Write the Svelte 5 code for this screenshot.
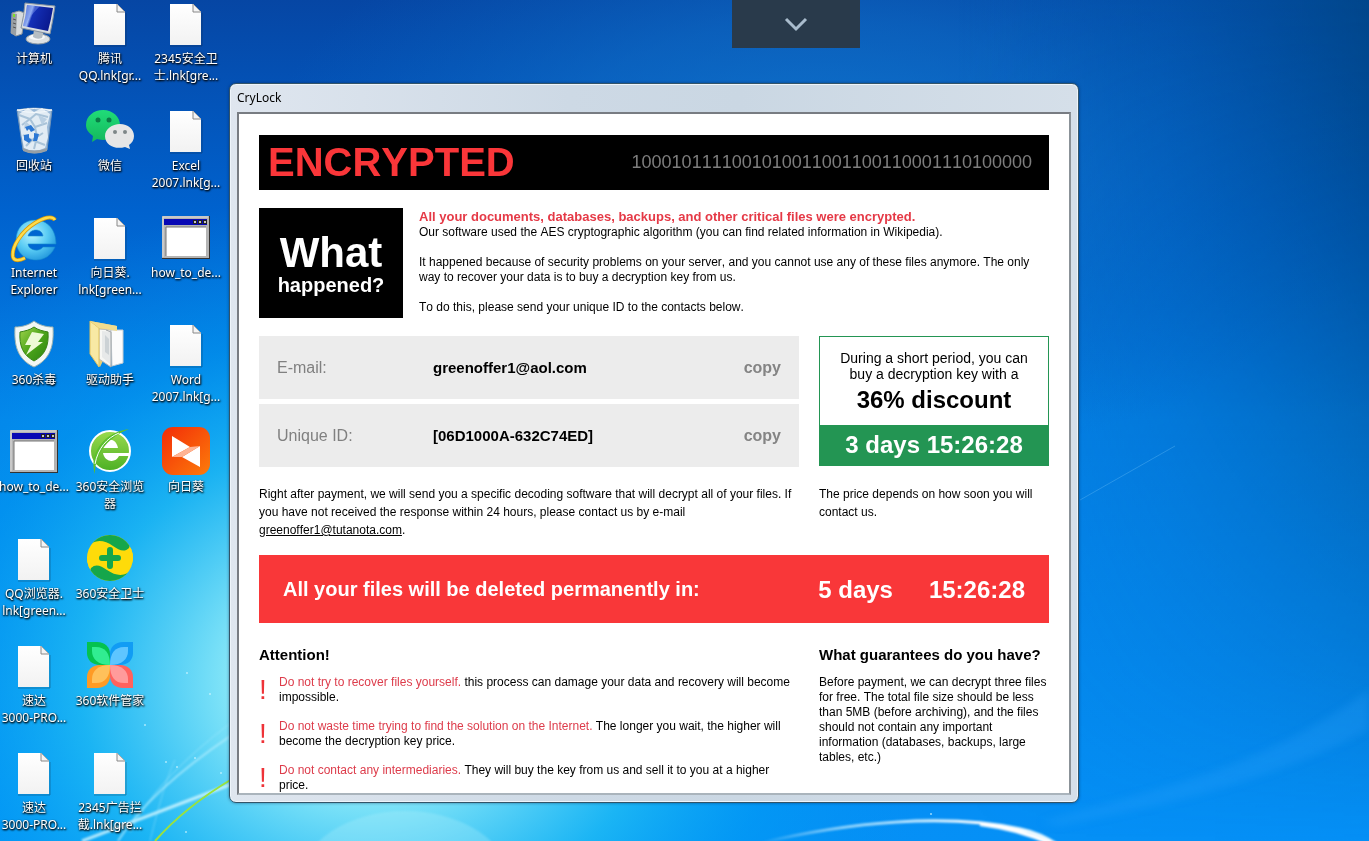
<script>
  const columns = [
    [
      { icon: 'computer', lines: ['计算机'] },
      { icon: 'bin', lines: ['回收站'] },
      { icon: 'ie', lines: ['Internet', 'Explorer'] },
      { icon: 'shield', lines: ['360杀毒'] },
      { icon: 'app', lines: ['how_to_de...'] },
      { icon: 'doc', lines: ['QQ浏览器.', 'lnk[green...'] },
      { icon: 'doc', lines: ['速达', '3000-PRO...'] },
      { icon: 'doc', lines: ['速达', '3000-PRO...'] }
    ],
    [
      { icon: 'doc', lines: ['腾讯', 'QQ.lnk[gr...'] },
      { icon: 'wechat', lines: ['微信'] },
      { icon: 'doc', lines: ['向日葵.', 'lnk[green...'] },
      { icon: 'folder', lines: ['驱动助手'] },
      { icon: 'browser', lines: ['360安全浏览', '器'] },
      { icon: 'guard', lines: ['360安全卫士'] },
      { icon: 'petals', lines: ['360软件管家'] },
      { icon: 'doc', lines: ['2345广告拦', '截.lnk[gre...'] }
    ],
    [
      { icon: 'doc', lines: ['2345安全卫', '士.lnk[gre...'] },
      { icon: 'doc', lines: ['Excel', '2007.lnk[g...'] },
      { icon: 'app', lines: ['how_to_de...'] },
      { icon: 'doc', lines: ['Word', '2007.lnk[g...'] },
      { icon: 'sunflower', lines: ['向日葵'] }
    ]
  ];

  const contacts = [
    { label: 'E-mail:', value: 'greenoffer1@aol.com' },
    { label: 'Unique ID:', value: '[06D1000A-632C74ED]' }
  ];

  const warnings = [
    {
      lead: 'Do not try to recover files yourself.',
      rest: 'this process can damage your data and recovery will become impossible.'
    },
    {
      lead: 'Do not waste time trying to find the solution on the Internet.',
      rest: 'The longer you wait, the higher will become the decryption key price.'
    },
    {
      lead: 'Do not contact any intermediaries.',
      rest: 'They will buy the key from us and sell it to you at a higher price.'
    }
  ];
</script>

<div class="desktop">
  <svg class="wallpaper" viewBox="0 0 1369 841" preserveAspectRatio="none" aria-hidden="true">
    <defs>
      <linearGradient id="sky" x1="0" y1="0" x2="0" y2="1">
        <stop offset="0" stop-color="#0646a4" />
        <stop offset=".25" stop-color="#0062ce" />
        <stop offset=".5" stop-color="#0482e8" />
        <stop offset="1" stop-color="#0590f6" />
      </linearGradient>
      <linearGradient id="dim" x1="0" y1="0" x2="1" y2="0">
        <stop offset=".7" stop-color="#0060b4" stop-opacity="0" />
        <stop offset=".85" stop-color="#0058a8" stop-opacity=".4" />
        <stop offset="1" stop-color="#004684" stop-opacity=".8" />
      </linearGradient>
      <linearGradient id="fade" x1="0" y1="0" x2="0" y2="1">
        <stop offset="0" stop-color="#fff" />
        <stop offset=".8" stop-color="#fff" stop-opacity=".25" />
        <stop offset="1" stop-color="#fff" stop-opacity="0" />
      </linearGradient>
      <mask id="upper"><rect width="1369" height="841" fill="url(#fade)" /></mask>
      <radialGradient id="haze" gradientUnits="userSpaceOnUse" cx="0" cy="0" r="1" gradientTransform="translate(820 170) scale(560 300)">
        <stop offset="0" stop-color="#1480d4" stop-opacity=".75" />
        <stop offset=".5" stop-color="#1074cc" stop-opacity=".5" />
        <stop offset="1" stop-color="#0868c4" stop-opacity="0" />
      </radialGradient>
      <radialGradient id="glow" gradientUnits="userSpaceOnUse" cx="0" cy="0" r="1" gradientTransform="translate(370 680) scale(580 490)">
        <stop offset="0" stop-color="#c8f8fc" />
        <stop offset=".25" stop-color="#86e8f8" stop-opacity=".95" />
        <stop offset=".5" stop-color="#20bef4" stop-opacity=".8" />
        <stop offset=".72" stop-color="#00a0f4" stop-opacity=".45" />
        <stop offset="1" stop-color="#0090f0" stop-opacity="0" />
      </radialGradient>
      <linearGradient id="arc" x1="0" y1="0" x2="1" y2="0">
        <stop offset="0" stop-color="#fff" stop-opacity="0" />
        <stop offset=".3" stop-color="#bdeaff" stop-opacity=".8" />
        <stop offset=".75" stop-color="#fff" />
        <stop offset="1" stop-color="#e8faff" />
      </linearGradient>
      <filter id="soft"><feGaussianBlur stdDeviation="1" /></filter>
      <filter id="softer"><feGaussianBlur stdDeviation="4" /></filter>
    </defs>
    <rect width="1369" height="841" fill="url(#sky)" />
    <rect width="1369" height="841" fill="url(#haze)" />
    <rect width="1369" height="841" fill="url(#dim)" mask="url(#upper)" />
    <rect width="1369" height="841" fill="url(#glow)" />
    <ellipse cx="405" cy="882" rx="105" ry="71" fill="#b6f2fb" opacity=".28" filter="url(#soft)" />
    <g fill="none" filter="url(#soft)">
      <path d="M82 841Q150 815 232 784" stroke="#d8f8ff" stroke-width="3" opacity=".8" />
      <path d="M118 841Q150 790 232 735" stroke="#b8f0ff" stroke-width="2" opacity=".7" />
      <path d="M130 832Q155 780 232 722" stroke="#a8ecff" stroke-width="1" opacity=".6" />
      <path d="M150 841Q165 780 175 760" stroke="#b8f0ff" stroke-width="1" opacity=".4" />
      <path d="M760 843C850 822 945 813 1020 829Q1040 833 1058 845" stroke="url(#arc)" stroke-width="3" />
      <path d="M980 824Q1020 829 1052 844" stroke="#fff" stroke-width="4" />
    </g>
    <path d="M155 841Q185 807 232 779" fill="none" stroke="#9be23c" stroke-width="2" />
    <path d="M1080 500L1175 446" stroke="#60b8f4" opacity=".4" />
    <path d="M1040 822C1150 790 1260 770 1369 690V730C1250 790 1160 805 1060 826Z" fill="#36a8ff" opacity=".22" filter="url(#softer)" />
    <g fill="#d8f8ff" opacity=".7">
      <circle cx="166" cy="762" r="1" /><circle cx="177" cy="767" r="1" /><circle cx="187" cy="673" r="1" />
      <circle cx="195" cy="758" r="1" /><circle cx="145" cy="725" r="1" /><circle cx="210" cy="694" r="1" />
      <circle cx="186" cy="832" r="1" /><circle cx="221" cy="773" r="1" /><circle cx="931" cy="814" r="1" />
    </g>
  </svg>

  <div class="icons">
    {#each columns as column}
      <div class="column">
        {#each column as item}
          <button class="shortcut" type="button">
            <svg width="48" height="48" viewBox="0 0 48 48" aria-hidden="true">
              {#if item.icon === 'doc'}
                <defs>
                  <linearGradient id="paper" x1="0" y1="0" x2="0" y2="1">
                    <stop offset="0" stop-color="#fff" /><stop offset="1" stop-color="#f2f2f2" />
                  </linearGradient>
                </defs>
                <path d="M8 46H40V13" fill="none" stroke="#123" stroke-opacity=".35" />
                <path d="M8 4H31L39 12V45H8Z" fill="url(#paper)" />
                <path d="M31 4V12H39" fill="#f4f4f4" stroke="#888" />
                <path d="M31 4L39 12" stroke="#aaa" />
              {:else if item.icon === 'app'}
                <rect y="2" width="48" height="43" fill="#333" />
                <rect y="2" width="47" height="42" fill="#b4b4b4" />
                <path d="M1 43V3H46" fill="none" stroke="#ddd" />
                <rect x="2" y="5" width="43" height="6" fill="#0808b4" />
                <rect x="4" y="13" width="40" height="29" fill="#fff" />
                <path d="M4 42V13H44" fill="none" stroke="#777" />
                <path d="M31 6h4v4h-4zM36 6h4v4h-4zM41 6h4v4h-4z" fill="#222" />
                <path d="M32 7h2v2h-2zM37 7h2v2h-2zM42 7h2v2h-2z" fill="#c4c4c4" />
              {:else if item.icon === 'computer'}
                <defs>
                  <linearGradient id="screen" x1="0" y1="0" x2="1" y2=".3">
                    <stop offset="0" stop-color="#1a3cc0" /><stop offset=".32" stop-color="#98b4f4" />
                    <stop offset=".4" stop-color="#1430b8" /><stop offset="1" stop-color="#0a1a90" />
                  </linearGradient>
                </defs>
                <path d="M2 13L9 11L15 13L12 34L6 36L1 33Z" fill="#d7dbdd" stroke="#8b9499" />
                <path d="M2 13L7 14L6 36L1 33Z" fill="#999fa3" />
                <path d="M3 19L6 20M3 23L6 24M3 27L6 28" stroke="#555" />
                <rect x="3" y="14" width="2" height="3" fill="#7cdf2a" />
                <ellipse cx="28" cy="39" rx="12" ry="5" fill="#dde1e3" stroke="#929ca3" />
                <ellipse cx="27" cy="37" rx="8" ry="3" fill="#f6f8f9" />
                <path d="M24 29L34 31L32 38Q27 40 23 37Z" fill="#b6bec3" />
                <path d="M15 3L45 6Q43 20 40 34L11 28Q14 16 15 3Z" fill="#d8dde1" stroke="#8793a0" />
                <path d="M17 5L43 8Q41 20 38 31L13 26Q16 16 17 5Z" fill="url(#screen)" />
                <path d="M17 5L30 6Q22 14 13 26Q16 16 17 5Z" fill="#7f9bf0" opacity=".45" />
              {:else if item.icon === 'bin'}
                <path d="M7 3Q24 -1 42 3L37 43Q24 49 13 43Z" fill="#b4cadc" opacity=".85" stroke="#8aa2b8" />
                <path d="M9 7L18 1L24 5L32 1L40 7L37 20L38 30L35 41Q24 46 14 41L11 26Z" fill="#e2ecf4" />
                <path d="M9 8L20 12L26 7L38 10M12 18L20 12L25 20L37 16M13 28L22 33L33 26M25 20L27 30L24 42M16 39L22 33L35 38" fill="none" stroke="#a9c3d8" stroke-width="2" />
                <path d="M28 8L37 12L32 18ZM15 14L20 18L14 22Z" fill="#b9cfe2" />
                <g fill="#2c78d4">
                  <path d="M15 20L21 18L25 23L21 25L19 22L17 24Z" />
                  <path d="M24 26L29 27L27 34L23 34L24 30Z" />
                  <path d="M14 28L19 27L19 31L22 33L19 36L14 33Z" />
                </g>
                <path d="M13 41Q24 46 37 41V44Q24 49 13 44Z" fill="#969fa6" />
                <path d="M7 3Q24 8 42 3Q24 0 7 3Z" fill="none" stroke="#f4f9fc" />
              {:else if item.icon === 'ie'}
                <defs>
                  <radialGradient id="ieblue" cx=".4" cy=".35" r=".7">
                    <stop offset="0" stop-color="#b8f3ff" /><stop offset=".55" stop-color="#5accf4" /><stop offset="1" stop-color="#2297dc" />
                  </radialGradient>
                </defs>
                <path d="M25 6C38 6 46 16 46 30H18C19 37 30 38 33 33H45C41 42 34 46 26 46C13 46 6 37 6 26C6 14 14 6 25 6ZM18 22H33C32 14 20 14 18 22Z" fill="url(#ieblue)" stroke="#168bcc" stroke-width=".6" />
                <path d="M45 6C42 1 33 4 25 9C12 17 1 33 3 43C4 47 9 47 15 44" fill="none" stroke="#d89a0a" stroke-width="4" />
                <path d="M45 6C42 1 33 4 25 9C12 17 1 33 3 43C4 47 9 47 15 44" fill="none" stroke="#ffdc4a" stroke-width="2.4" />
              {:else if item.icon === 'shield'}
                <defs>
                  <linearGradient id="shieldgreen" x1="0" y1="0" x2="1" y2="1">
                    <stop offset="0" stop-color="#a0d44c" /><stop offset=".5" stop-color="#4ca41a" /><stop offset="1" stop-color="#2c8410" />
                  </linearGradient>
                </defs>
                <path d="M24 0C29 4 36 6 43 6C44 24 41 38 24 46C7 38 4 24 5 6C12 6 19 4 24 0Z" fill="#f3f7f4" stroke="#9cb2b0" />
                <path d="M24 6C28 9 33 10 38 11C39 25 35 34 24 40C13 34 9 25 10 11C15 10 20 9 24 6Z" fill="url(#shieldgreen)" stroke="#388214" />
                <path d="M22 11L34 13L28 21H33L16 34L21 24H15Z" fill="#eefad6" />
              {:else if item.icon === 'wechat'}
                <defs>
                  <linearGradient id="wegreen" x1="0" y1="0" x2="0" y2="1">
                    <stop offset="0" stop-color="#20dc78" /><stop offset="1" stop-color="#14b85c" />
                  </linearGradient>
                </defs>
                <path d="M17 3C27 3 34 10 34 18C34 27 27 33 17 33C14 33 12 32 11 32L6 35L7 29C3 26 0 23 0 18C0 9 8 3 17 3Z" fill="url(#wegreen)" />
                <path d="M34 17C42 17 48 22 48 29C48 33 46 36 43 38L44 42L39 40C29 43 19 38 19 29C19 22 26 17 34 17Z" fill="#e6e6e6" />
                <circle cx="12" cy="13" r="2.5" fill="#0a7c46" /><circle cx="23" cy="13" r="2.5" fill="#0a7c46" />
                <circle cx="29" cy="25" r="2" fill="#7f8788" /><circle cx="39" cy="25" r="2" fill="#7f8788" />
              {:else if item.icon === 'folder'}
                <path d="M4 0L31 5V12L14 46L4 33Z" fill="#e9cf76" />
                <path d="M13 8L25 9V46L13 38Z" fill="#f7f7f4" stroke="#bababa" />
                <path d="M16 10L25 11V44L16 36Z" fill="#e7e9e9" />
                <path d="M19 14L23 18V34L19 31Z" fill="#ccd2d5" />
                <path d="M25 9H37V42L26 45Z" fill="#fcfcfc" stroke="#c7cdd2" />
                <path d="M20 9L25 11V46" fill="none" stroke="#a4a8aa" />
                <path d="M4 0L13 7V46L4 33Z" fill="#f8e9a4" stroke="#dfc25e" />
                <path d="M4 0L31 5V10L13 7Z" fill="#f1dc8e" />
              {:else if item.icon === 'browser'}
                <defs>
                  <linearGradient id="leaf" x1="0" y1="0" x2="0" y2="1">
                    <stop offset="0" stop-color="#9ada4e" /><stop offset="1" stop-color="#4cb024" />
                  </linearGradient>
                </defs>
                <circle cx="24" cy="23" r="20" fill="url(#leaf)" stroke="#fff" stroke-width="2" />
                <path d="M17 20C19 9 30 9 32 20ZM17 25H44V28H33C30 35 19 35 17 25Z" fill="#fff" />
                <path d="M9 46C3 28 15 5 43 1C25 8 9 23 9 46Z" fill="#5cc02c" />
                <path d="M9 36C12 20 21 10 33 5" fill="none" stroke="#fff" />
              {:else if item.icon === 'sunflower'}
                <defs>
                  <linearGradient id="sun" x1="0" y1="0" x2="1" y2="1">
                    <stop offset="0" stop-color="#f32c08" /><stop offset="1" stop-color="#fc7c0a" />
                  </linearGradient>
                </defs>
                <rect width="48" height="48" rx="11" y="-1" fill="url(#sun)" />
                <path d="M10 8L28 19L10 29ZM38 18V39L20 29Z" fill="#fff" />
                <path d="M10 29L28 19L38 18L20 29Z" fill="#ffb494" />
              {:else if item.icon === 'guard'}
                <clipPath id="disc"><circle cx="24" cy="23" r="23" /></clipPath>
                <g clip-path="url(#disc)">
                  <rect width="48" height="48" fill="#fedb0a" />
                  <path d="M0 14C7 4 17 4 27 11C33 15 38 18 43 13L48 -2H0Z" fill="#15a64b" />
                  <path d="M48 32C41 42 31 42 21 35C15 31 10 28 5 33L0 48H48Z" fill="#15a64b" />
                  <path d="M41 15L48 10V30M7 31L0 36V20" fill="#fedb0a" />
                </g>
                <path d="M24 15V31M16 23H32" stroke="#15a64b" stroke-width="6" stroke-linecap="round" />
              {:else if item.icon === 'petals'}
                <path d="M1 0H11C19 0 24 5 24 12V23H14C6 23 1 18 1 11Z" fill="#05c24f" />
                <path d="M47 0H37C29 0 24 5 24 12V23H34C42 23 47 18 47 11Z" fill="#119cf4" />
                <path d="M1 46H11C19 46 24 41 24 34V23H14C6 23 1 28 1 35Z" fill="#ff9b25" />
                <path d="M47 46H37C29 46 24 41 24 34V23H34C42 23 47 28 47 35Z" fill="#ff625e" />
                <path d="M6 5H10C19 5 24 11 24 23C12 23 6 17 6 9Z" fill="#31ed91" />
                <path d="M42 5H38C29 5 24 11 24 23C36 23 42 17 42 9Z" fill="#5ec5ff" />
                <path d="M6 41H10C19 41 24 35 24 23C12 23 6 29 6 37Z" fill="#ffc15b" />
                <path d="M42 41H38C29 41 24 35 24 23C36 23 42 29 42 37Z" fill="#ff9b9b" />
              {/if}
            </svg>
            <span class="caption">
              {#each item.lines as line}<span>{line}</span>{/each}
            </span>
          </button>
        {/each}
      </div>
    {/each}
  </div>

  <button class="pulldown" type="button" aria-label="Show toolbar">
    <svg width="24" height="16" viewBox="0 0 24 16" aria-hidden="true">
      <path d="M2 3L12 13L22 3" fill="none" stroke="#a9bccd" stroke-width="3" />
    </svg>
  </button>

  <section class="window">
    <h1 class="titlebar">CryLock</h1>
    <div class="page">
      <header class="banner">
        <strong>ENCRYPTED</strong>
        <span>1000101111001010011001100110001110100000</span>
      </header>

      <div class="intro">
        <h2 class="what"><span class="big">What</span><span>happened?</span></h2>
        <div class="story">
          <strong>All your documents, databases, backups, and other critical files were encrypted.</strong>
          <p>Our software used the AES cryptographic algorithm (you can find related information in Wikipedia).</p>
          <p>It happened because of security problems on your server, and you cannot use any of these files anymore. The only way to recover your data is to buy a decryption key from us.</p>
          <p>To do this, please send your unique ID to the contacts below.</p>
        </div>
      </div>

      <div class="split contact">
        <div class="fields">
          {#each contacts as c}
            <div class="field">
              <span class="label">{c.label}</span>
              <strong>{c.value}</strong>
              <button type="button">copy</button>
            </div>
          {/each}
        </div>
        <div class="offer">
          <p>During a short period, you can<br />buy a decryption key with a</p>
          <strong>36% discount</strong>
          <div class="timer">3 days 15:26:28</div>
        </div>
      </div>

      <div class="split notes">
        <p>Right after payment, we will send you a specific decoding software that will decrypt all of your files. If you have not received the response within 24 hours, please contact us by e-mail <br /><a href="#contact">greenoffer1@tutanota.com</a>.</p>
        <p>The price depends on how soon you will contact us.</p>
      </div>

      <div class="deadline">
        <span class="message">All your files will be deleted permanently in:</span>
        <span>5 days</span>
        <span>15:26:28</span>
      </div>

      <div class="split details">
        <div>
          <h3>Attention!</h3>
          <ul>
            {#each warnings as w}
              <li><span class="mark">!</span><p><em>{w.lead}</em> {w.rest}</p></li>
            {/each}
          </ul>
        </div>
        <div>
          <h3>What guarantees do you have?</h3>
          <p>Before payment, we can decrypt three files for free. The total file size should be less than 5MB (before archiving), and the files should not contain any important information (databases, backups, large tables, etc.)</p>
        </div>
      </div>
    </div>
  </section>
</div>

<style>
  :global(body) {
    margin: 0;
  }
  .desktop {
    position: relative;
    height: 100vh;
    min-height: 841px;
    overflow: hidden;
    font-family: "Liberation Sans", Arial, sans-serif;
    font-size: 12px;
    line-height: 15px;
    font-kerning: none;
    color: #000;
  }
  .wallpaper {
    position: absolute;
    inset: 0;
    width: 100%;
    height: 100%;
  }
  h1, h2, h3, p, ul {
    margin: 0;
    padding: 0;
  }
  button {
    font-family: inherit;
    border: 0;
    padding: 0;
    background: none;
    cursor: pointer;
  }

  .icons {
    position: relative;
    display: flex;
    margin-left: -4px;
  }
  .column {
    display: grid;
    grid-auto-rows: 107px;
    align-content: start;
  }
  .shortcut {
    display: flex;
    flex-direction: column;
    align-items: center;
    gap: 2px;
    width: 76px;
    height: 100px;
    font-family: "Noto Sans", "Noto Sans CJK SC", sans-serif;
    font-size: 12px;
    line-height: 17px;
    color: #fff;
    text-shadow: 0 1px 2px #000, 1px 1px 2px #000;
    white-space: nowrap;
  }
  .shortcut svg {
    flex: none;
    overflow: visible;
  }
  .caption {
    display: flex;
    flex-direction: column;
    align-items: center;
  }
  .caption span {
    height: 17px;
  }

  .pulldown {
    position: absolute;
    top: 0;
    left: 732px;
    width: 128px;
    height: 48px;
    background: #293a4b;
    display: flex;
    align-items: center;
    justify-content: center;
  }

  .window {
    position: absolute;
    left: 229px;
    top: 83px;
    box-sizing: border-box;
    width: 850px;
    height: 720px;
    display: flex;
    flex-direction: column;
    padding: 0 7px 7px;
    border: 1px solid #335468;
    border-radius: 7px;
    background: linear-gradient(90deg, #dfe6ef, #cdd9e5 40%, #cad7e3 60%, #d5dfe9);
    box-shadow: inset 0 0 0 1px #eef4fa, 0 0 3px rgba(0, 20, 60, 0.5);
  }
  .titlebar {
    flex: none;
    height: 28px;
    font: 400 12px/28px "Noto Sans", sans-serif;
  }
  .page {
    flex: 1;
    min-height: 0;
    overflow: hidden;
    padding: 21px 20px 0;
    border: 2px solid #787c82;
    border-right: 2px solid #8b9298;
    border-bottom: 2px solid #aab4bc;
    background: #fff;
  }

  .banner {
    display: flex;
    align-items: center;
    justify-content: space-between;
    height: 55px;
    padding: 0 17px 0 9px;
    background: #000;
    color: #7d7d7d;
    font-size: 18px;
  }
  .banner strong {
    font-size: 40px;
    color: #fa3639;
  }
  .intro {
    display: flex;
    gap: 16px;
    margin-top: 18px;
  }
  .what {
    flex: none;
    display: flex;
    flex-direction: column;
    align-items: center;
    justify-content: center;
    box-sizing: border-box;
    width: 144px;
    height: 110px;
    padding-top: 2px;
    background: #000;
    color: #fff;
    font-size: 20px;
    line-height: 22px;
  }
  .what .big {
    font-size: 42px;
    line-height: 42px;
  }
  .story strong {
    display: block;
    font-size: 13px;
    line-height: 17px;
    color: #e53946;
  }
  .story p + p {
    margin-top: 15px;
  }

  .split {
    display: grid;
    grid-template-columns: minmax(0, 1fr) 230px;
    gap: 20px;
  }
  .contact {
    margin-top: 18px;
  }
  .fields {
    display: grid;
    gap: 5px;
  }
  .field {
    display: grid;
    grid-template-columns: 156px 1fr auto;
    align-items: center;
    height: 63px;
    padding: 0 18px;
    background: #ececec;
  }
  .label {
    font-size: 16px;
    color: #808080;
  }
  .field strong {
    font-size: 15px;
  }
  .field button {
    font-size: 16px;
    font-weight: 700;
    color: #848484;
  }
  .offer {
    display: flex;
    flex-direction: column;
    height: 130px;
    box-sizing: border-box;
    border: 1px solid #239553;
    padding-top: 13px;
    text-align: center;
    font-size: 14px;
    line-height: 16px;
  }
  .offer strong,
  .timer {
    font-size: 24px;
    line-height: 36px;
  }
  .timer {
    margin-top: auto;
    line-height: 40px;
    font-weight: 700;
    color: #fff;
    background: #239553;
  }
  .notes {
    margin-top: 18px;
    line-height: 18px;
  }
  .notes a {
    color: inherit;
  }
  .deadline {
    display: flex;
    align-items: center;
    gap: 36px;
    height: 68px;
    margin-top: 16px;
    padding: 0 24px;
    background: #f93739;
    color: #fff;
    font-size: 24px;
    font-weight: 700;
  }
  .message {
    flex: 1;
    font-size: 20px;
  }
  .details {
    margin-top: 24px;
  }
  h3 {
    font-size: 15px;
    line-height: 16px;
    margin-bottom: 12px;
  }
  ul {
    display: grid;
    gap: 14px;
    list-style: none;
  }
  li {
    display: flex;
  }
  .mark {
    flex: none;
    width: 20px;
    font-size: 28px;
    line-height: 30px;
    color: #ee3338;
  }
  em {
    font-style: normal;
    color: #dd3c4b;
  }
</style>
